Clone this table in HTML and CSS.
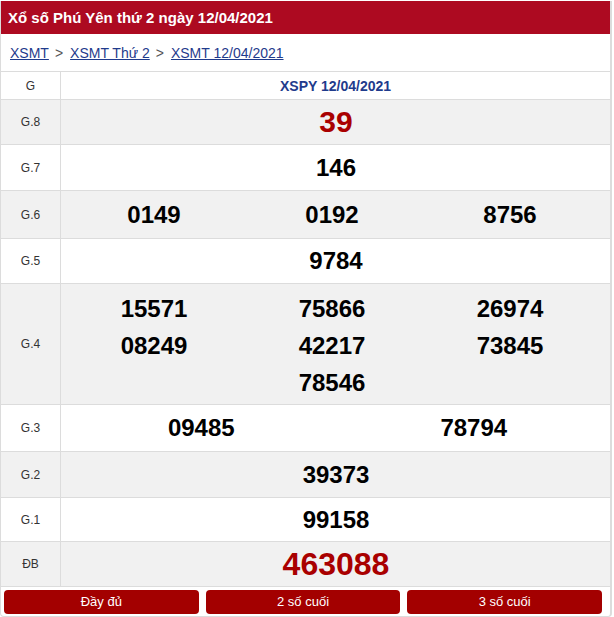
FILE: index.html
```html
<!DOCTYPE html>
<html lang="vi">
<head>
<meta charset="utf-8">
<title>XSPY 12/04/2021</title>
<link rel="stylesheet" href="styles.css">
</head>
<body>
<div class="box">
  <h2 class="title">Xổ số Phú Yên thứ 2 ngày 12/04/2021</h2>
  <div class="crumbs">
    <a href="#">XSMT</a><span class="sep">&gt;</span><a href="#">XSMT Thứ 2</a><span class="sep">&gt;</span><a href="#">XSMT 12/04/2021</a>
  </div>
  <div class="table">
    <div class="row head"><div class="lbl">G</div><div class="val"><span class="hdr">XSPY 12/04/2021</span></div></div>
    <div class="row alt r45"><div class="lbl">G.8</div><div class="val one"><span class="n big red">39</span></div></div>
    <div class="row r46"><div class="lbl">G.7</div><div class="val one"><span class="n">146</span></div></div>
    <div class="row alt r48"><div class="lbl">G.6</div><div class="val three"><span class="n">0149</span><span class="n">0192</span><span class="n">8756</span></div></div>
    <div class="row r45"><div class="lbl">G.5</div><div class="val one"><span class="n">9784</span></div></div>
    <div class="row alt g4"><div class="lbl">G.4</div><div class="val three multi"><span class="n">15571</span><span class="n">75866</span><span class="n">26974</span><span class="n">08249</span><span class="n">42217</span><span class="n">73845</span><span class="n"></span><span class="n">78546</span></div></div>
    <div class="row r47"><div class="lbl">G.3</div><div class="val two"><span class="n">09485</span><span class="n">78794</span></div></div>
    <div class="row alt r46"><div class="lbl">G.2</div><div class="val one"><span class="n">39373</span></div></div>
    <div class="row r44"><div class="lbl">G.1</div><div class="val one"><span class="n">99158</span></div></div>
    <div class="row alt r45"><div class="lbl">ĐB</div><div class="val one"><span class="n db red">463088</span></div></div>
  </div>
  <div class="btns">
    <a href="#" class="btn">Đầy đủ</a>
    <a href="#" class="btn">2 số cuối</a>
    <a href="#" class="btn">3 số cuối</a>
  </div>
</div>
</body>
</html>
```
FILE: styles.css
```css
* { box-sizing: border-box; }
body {
  margin: 0;
  font-family: "Liberation Sans", Arial, sans-serif;
  background: #fff;
  color: #000;
}
.box {
  width: 612px;
  border: 1px solid #dcdcdc;
  border-right-width: 2px;
  border-top: none;
  border-radius: 0 0 4px 4px;
  padding-bottom: 2px;
}
.title {
  margin: 0;
  margin-top: 1px;
  height: 33px;
  line-height: 33px;
  background: #ad0a21;
  color: #fff;
  font-size: 15px;
  font-weight: bold;
  padding-left: 7px;
}
.crumbs {
  height: 37px;
  display: flex;
  align-items: center;
  padding-left: 9px;
  font-size: 14px;
}
.crumbs a {
  color: #1f3b8c;
  text-decoration: underline;
}
.sep {
  color: #555;
  margin: 0 7px 0 6px;
  font-size: 14px;
}
.table {
  border-top: 1px solid #dcdcdc;
}
.row {
  display: flex;
  border-bottom: 1px solid #dcdcdc;
  background: #fff;
}
.row.alt { background: #f1f1f1; }
.row.head { height: 28px; }
.r44 { height: 44px; }
.r45 { height: 45px; }
.r46 { height: 46px; }
.r47 { height: 47px; }
.r48 { height: 48px; }
.g4 { height: 121px; }
.lbl {
  width: 60px;
  flex: none;
  border-right: 1px solid #dcdcdc;
  display: flex;
  align-items: center;
  justify-content: center;
  font-size: 12px;
  color: #333;
}
.val {
  flex: 1;
  display: flex;
  align-items: center;
  justify-content: center;
}
.hdr {
  color: #1f3b8c;
  font-weight: bold;
  font-size: 14px;
}
.n {
  font-weight: bold;
  font-size: 24px;
  text-align: center;
}
.big { font-size: 30px; }
.db { font-size: 32px; }
.red { color: #a90000; }
.val.one { padding-left: 1px; }
.val.three {
  display: grid;
  grid-template-columns: repeat(3, 1fr);
  padding: 0 11px 0 4px;
  align-content: center;
}
.val.two {
  display: grid;
  grid-template-columns: repeat(2, 1fr);
  padding: 0 0 0 4px;
  align-content: center;
}
.val.multi {
  grid-auto-rows: 37px;
  align-content: start;
  padding-top: 6px;
}
.val.multi .n { line-height: 37px; }
.btns {
  display: flex;
  gap: 7px;
  padding: 3px 8px 0 3px;
}
.btn {
  flex: 1;
  height: 24px;
  line-height: 24px;
  background: #a30000;
  color: #fff;
  text-decoration: none;
  text-align: center;
  font-size: 13px;
  border-radius: 4px;
}
```
